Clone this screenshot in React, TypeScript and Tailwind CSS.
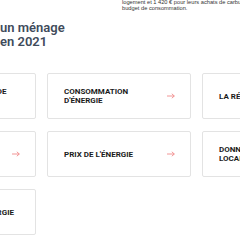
import React from "react";

function Arrow() {
  return (
    <svg width="8" height="6" viewBox="0 0 8 6" className="shrink-0">
      <path d="M0 3H7.3M4.8 0.8L7.3 3L4.8 5.2" stroke="#f08a8a" strokeWidth="0.9" fill="none" />
    </svg>
  );
}

function Card({ lines, arrow }: { lines: string[]; arrow?: boolean }) {
  return (
    <div className="h-[46px] border border-[#e3e3e3] rounded-[2px] bg-white flex items-center justify-between pl-[16px] pr-[15px]">
      <div className="text-[8px] leading-[9px] font-bold text-[#1b1b1b] uppercase whitespace-nowrap" style={{ fontFamily: "Roboto, sans-serif" }}>
        {lines.map((l, i) => (
          <div key={i}>{l}</div>
        ))}
      </div>
      {arrow && <Arrow />}
    </div>
  );
}

export default function App() {
  return (
    <div className="w-[240px] h-[240px] overflow-hidden bg-white">
      <div className="ml-[-108px] w-[460px] flex flex-col">
        <div className="h-[73px] flex">
          <div className="w-[230px] pl-[108px] pt-[21px]">
            <div className="text-[13px] leading-[14px] font-semibold text-[#3f4b5b]" style={{ fontFamily: "Roboto, sans-serif" }}>
              <div>un ménage</div>
              <div>en 2021</div>
            </div>
          </div>
          <div className="w-[230px] pt-[0px] text-[5.7px] leading-[5.5px] text-[#333] whitespace-nowrap" style={{ fontFamily: "'Liberation Sans', sans-serif" }}>
            <div>logement et 1 420 € pour leurs achats de carburant</div>
            <div>budget de consommation.</div>
          </div>
        </div>
        <div className="grid grid-cols-[144px_144px_144px] gap-x-[11px] gap-y-[12px]">
          <Card lines={["Dépenses annuelles de", "vie"]} />
          <Card lines={["Consommation", "d'énergie"]} arrow />
          <Card lines={["La rénovation"]} arrow />
          <Card lines={["Mix"]} arrow />
          <Card lines={["Prix de l'énergie"]} arrow />
          <Card lines={["Données", "locales"]} arrow />
          <Card lines={["Les marchés de l'énergie"]} />
        </div>
      </div>
    </div>
  );
}
